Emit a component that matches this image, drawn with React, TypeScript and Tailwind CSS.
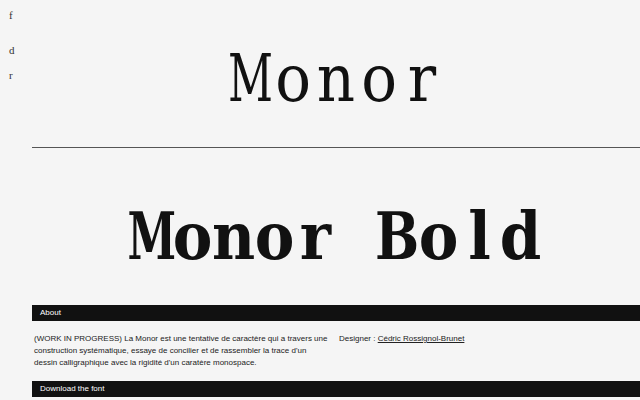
import React from 'react';

const display = { fontFamily: '"DejaVu Serif Condensed", "DejaVu Serif", serif' };
const sans = { fontFamily: '"Liberation Sans", Arial, sans-serif' };
const serif = { fontFamily: '"Liberation Serif", "Times New Roman", serif' };

// wide capitals get squeezed so every glyph fits its fixed-width cell
const squeeze: Record<string, string> = {
  M: 'scale-x-[0.74]',
  B: 'scale-x-[0.88]',
};

// monospace look: each glyph sits in a fixed-width cell
const MonoWord: React.FC<{ text: string; bold?: boolean }> = ({ text, bold }) => (
  <div className={`flex text-[66px] leading-[66px] ${bold ? 'font-bold' : 'font-normal'}`} style={display}>
    {text.split('').map((ch, i) => (
      <span key={i} className={`${bold ? 'w-[41px]' : 'w-[43px]'} flex justify-center overflow-visible`}>
        <span className={`inline-block ${squeeze[ch] ?? ''}`}>{ch === ' ' ? '\u00a0' : ch}</span>
      </span>
    ))}
  </div>
);

const SectionBar: React.FC<{ label: string }> = ({ label }) => (
  <div className="h-[16px] bg-[#111111] text-white text-[8px] leading-[16px] pl-[8px]" style={sans}>
    {label}
  </div>
);

export default function App() {
  return (
    <div className="min-h-[400px] w-[640px] overflow-hidden bg-[#f5f5f5] text-[#111] flex">
      {/* side nav */}
      <div className="w-[32px] shrink-0 flex flex-col pl-[9px] pt-[8px] text-[11px] text-[#333]" style={serif}>
        <span className="leading-[14px]">f</span>
        <span className="leading-[14px] mt-[21px]">d</span>
        <span className="leading-[14px] mt-[11px]">r</span>
      </div>

      <div className="flex-1 min-w-0">
        {/* regular */}
        <div className="h-[148px] border-b border-[#555] flex justify-center pt-[46px]">
          <MonoWord text="Monor" />
        </div>

        {/* bold */}
        <div className="h-[157px] flex justify-center pt-[55px]">
          <MonoWord text="Monor Bold" bold />
        </div>

        <SectionBar label="About" />
        <div className="grid grid-cols-2 pt-[12px] pb-[12px] text-[8px] leading-[12px] text-[#222]" style={sans}>
          <p className="pl-[2px] pr-[6px]">
            (WORK IN PROGRESS) La Monor est une tentative de caractère qui a travers une construction systématique,
            essaye de concilier et de rassembler la trace d'un dessin calligraphique avec la rigidité d'un caratère
            monospace.
          </p>
          <p className="pl-[3px]">
            Designer : <span className="underline">Cédric Rossignol-Brunet</span>
          </p>
        </div>
        <SectionBar label="Download the font" />
      </div>
    </div>
  );
}
